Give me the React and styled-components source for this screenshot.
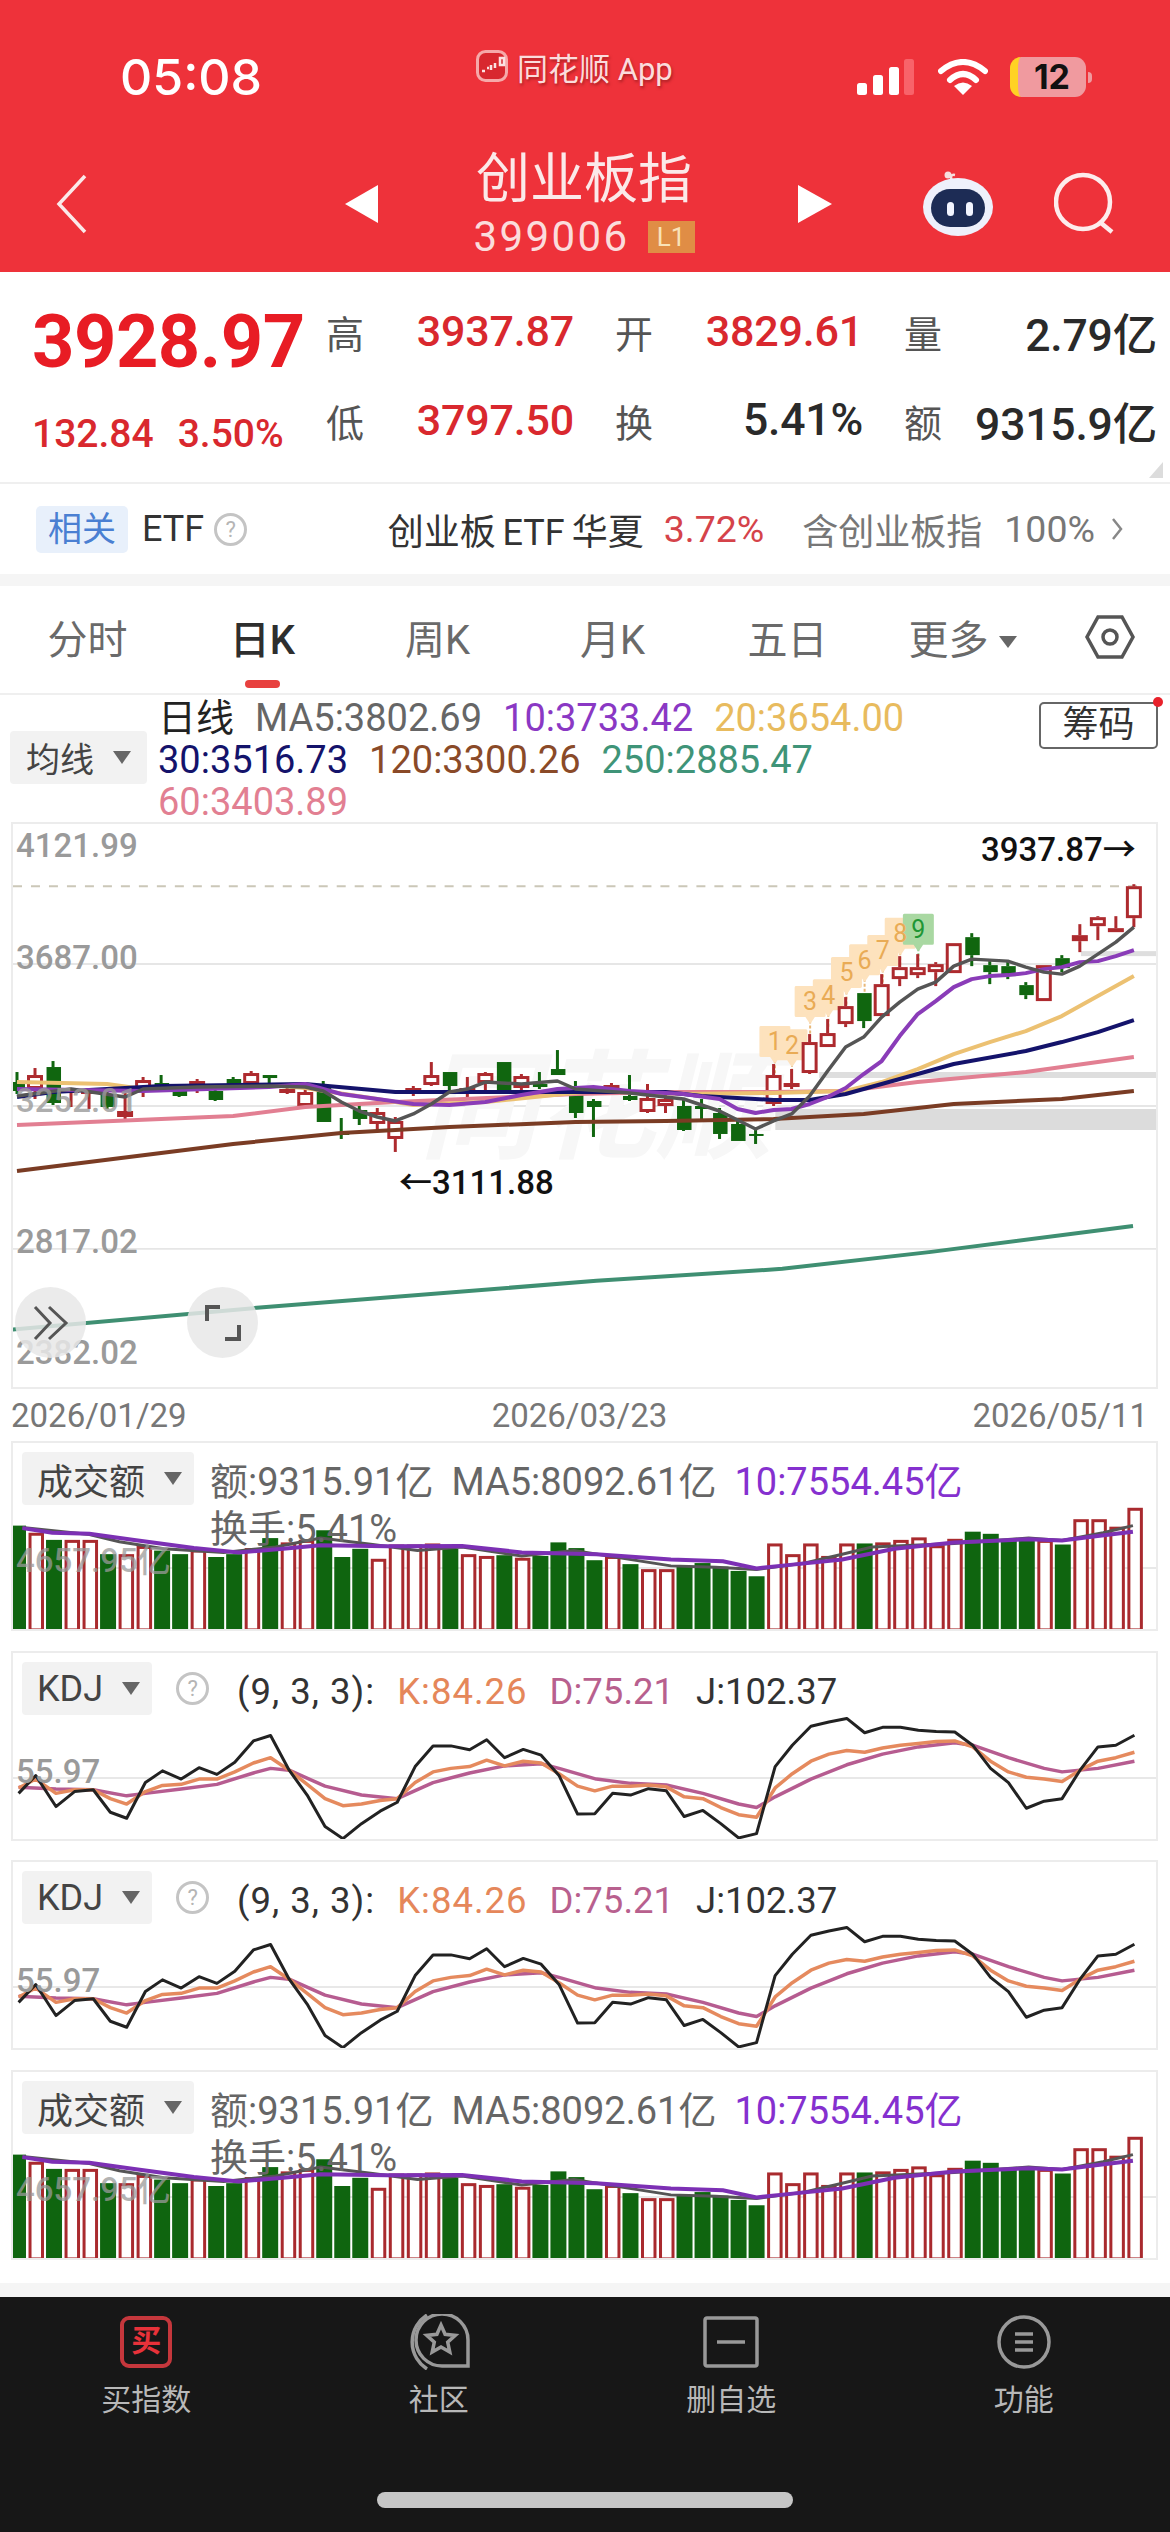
import React from 'react';
import styled, { createGlobalStyle } from 'styled-components';

const FONT = `Roboto, "Noto Sans CJK SC", sans-serif`;
const RED = '#d9282e';

const candleX = (i) => 17 + 18.03 * i;

// [high, bodyTop, bodyBottom, low, up]
const CANDLES = [
  [1073,1083,1092,1095,0],[1069,1076,1090,1100,1],[1062,1068,1104,1106,0],[1090,1090,1094,1108,1],
  [1090,1091,1095,1110,1],[1090,1095,1108,1110,0],[1094,1112,1118,1123,1],[1078,1081,1090,1098,1],
  [1076,1084,1087,1092,0],[1085,1088,1097,1098,0],[1080,1082,1092,1094,1],[1088,1092,1101,1102,0],
  [1078,1080,1087,1088,0],[1072,1074,1085,1088,1],[1076,1076,1079,1087,0],[1088,1090,1093,1095,1],
  [1090,1093,1107,1109,1],[1082,1087,1123,1123,0],[1119,1133,1136,1140,0],[1104,1111,1120,1126,0],
  [1109,1113,1125,1132,1],[1118,1122,1140,1153,1],[1087,1089,1095,1097,1],[1063,1076,1086,1087,1],
  [1073,1073,1087,1095,0],[1078,1089,1093,1098,1],[1073,1074,1084,1093,1],[1063,1063,1093,1093,0],
  [1075,1077,1089,1093,1],[1073,1085,1088,1090,0],[1051,1070,1076,1076,0],[1082,1095,1114,1119,0],
  [1100,1102,1108,1138,0],[1084,1086,1092,1096,1],[1076,1097,1101,1102,0],[1085,1099,1113,1114,1],
  [1096,1100,1107,1114,1],[1100,1107,1131,1132,0],[1100,1107,1110,1121,0],[1109,1114,1135,1140,0],
  [1122,1125,1142,1142,0],[1128,1135,1137,1145,0],[1065,1076,1105,1107,1],[1070,1084,1087,1090,1],
  [1035,1043,1074,1075,1],[1020,1034,1048,1048,1],[998,1007,1025,1028,1],[994,994,1022,1029,0],
  [975,985,1017,1017,1],[957,968,980,987,1],[955,968,976,979,1],[963,965,973,987,1],
  [944,944,974,974,1],[934,938,956,967,0],[962,966,973,985,0],[962,967,977,980,0],
  [983,986,996,1000,0],[966,966,1002,1002,1],[956,959,969,973,0],[925,936,942,953,1],
  [917,918,927,941,1],[917,929,932,932,1],[885,887,919,928,1],
];

const MA_LINES = [
  { color: '#e27f92', width: 4, pts: [[0,1126],[12,1117],[16,1108],[21,1103],[31,1095],[36,1093],[42,1093],[46,1092],[50,1083],[56,1073],[58,1068],[62,1058]] },
  { color: '#7a3c24', width: 4, pts: [[0,1172],[12,1145],[18,1134],[24,1128],[31,1123],[36,1122],[42,1120],[47,1115],[52,1105],[58,1100],[62,1092]] },
  { color: '#ecc172', width: 4, pts: [[0,1083],[5,1085],[7,1090],[14,1086],[16,1089],[20,1100],[22,1106],[26,1103],[32,1092],[37,1095],[42,1094],[46,1092],[48,1083],[50,1070],[52,1055],[54,1043],[56,1032],[58,1017],[60,997],[62,977]] },
  { color: '#14136b', width: 4, pts: [[0,1098],[2,1093],[5,1090],[8,1087],[16,1085],[21,1093],[31,1093],[36,1093],[38,1097],[42,1101],[44,1101],[46,1095],[48,1085],[52,1065],[56,1052],[58,1043],[60,1033],[62,1021]] },
  { color: '#8a3cb8', width: 4, pts: [[0,1090],[7,1092],[14,1088],[16,1085],[18,1095],[20,1100],[22,1105],[24,1106],[26,1103],[28,1096],[30,1090],[32,1088],[34,1092],[37,1095],[39,1100],[40,1110],[41,1114],[42,1111],[43,1110],[44,1105],[45,1098],[46,1089],[47,1075],[48,1062],[49,1037],[50,1015],[51,1002],[52,988],[53,980],[54,977],[55,976],[56,974],[57,970],[58,968],[59,963],[60,962],[61,957],[62,951]] },
  { color: '#555555', width: 3.5, pts: [[0,1097],[3,1090],[6,1098],[7,1090],[10,1088],[14,1087],[16,1088],[17,1092],[18,1103],[19,1112],[20,1118],[21,1122],[22,1115],[23,1105],[24,1093],[25,1090],[26,1083],[28,1085],[30,1082],[31,1090],[34,1094],[37,1100],[39,1112],[41,1130],[42,1122],[43,1115],[44,1097],[45,1072],[46,1048],[47,1038],[48,1018],[49,1003],[50,990],[51,983],[52,967],[53,960],[54,961],[55,962],[56,968],[57,973],[58,975],[59,967],[60,955],[61,943],[62,928]] },
];

const MA250 = '10,1331 257,1309 597,1282 783,1270 932,1253 1134,1227';

const TD_MARKS = [
  ['1',483,670],['2',530,680],['3',580,550],['4',630,530],['5',680,463],
  ['6',730,425],['7',780,397],['8',828,345],['9',878,333],
].map(([n, zx, zy]) => ({ n, x: 600 + zx * 0.3635, y: 820 + zy / 3, nine: n === '9' }));

const VOLUME_TOPS = [265,285,305,305,305,345,345,322,335,345,332,353,345,328,300,312,305,278,353,330,358,318,318,315,330,345,350,348,355,350,312,328,362,350,373,387,387,380,370,380,392,407,315,345,315,350,315,315,312,305,298,320,302,282,288,305,305,305,318,247,247,268,215];
const VOLUME_UP = [0,1,0,1,1,0,1,1,0,0,1,0,0,1,0,1,1,0,0,0,1,1,1,1,0,1,1,0,1,0,0,0,0,1,0,1,1,0,0,0,0,0,1,1,1,1,1,0,1,1,1,1,1,0,0,0,0,1,0,1,1,1,1];

const VOL_MA10 = [[30,272],[70,285],[120,288],[180,305],[260,328],[320,340],[380,330],[430,320],[520,323],[620,322],[700,340],[800,345],[900,360],[970,365],[1015,385],[1060,375],[1130,360],[1200,330],[1280,312],[1380,303],[1425,307],[1470,295],[1520,282]];
const VOL_MA5 = [[30,270],[120,290],[160,310],[220,330],[300,340],[370,325],[430,300],[500,318],[560,335],[620,325],[700,350],[770,335],[900,378],[960,382],[1015,388],[1080,370],[1130,345],[1170,325],[1280,315],[1380,300],[1425,307],[1480,285],[1520,265]];

const KDJ_J = [[25,1015],[48,965],[75,1052],[100,1010],[125,1005],[148,1068],[170,1085],[195,985],[218,952],[243,975],[267,943],[291,962],[315,928],[340,868],[363,853],[388,950],[412,1020],[436,1108],[460,1142],[485,1100],[510,1065],[533,1040],[557,940],[581,882],[605,882],[630,893],[653,865],[677,915],[702,892],[726,908],[750,965],[775,1073],[798,1072],[822,1015],[846,1020],[870,1002],[894,1008],[918,1080],[943,1063],[967,1100],[991,1140],[1015,1128],[1040,940],[1063,880],[1088,827],[1112,815],[1136,805],[1160,845],[1184,830],[1208,830],[1232,838],[1256,842],[1281,843],[1305,880],[1329,945],[1353,985],[1377,1057],[1401,1037],[1425,1030],[1449,950],[1473,885],[1497,880],[1522,852]];
const KDJ_K = [[25,1000],[48,975],[75,1015],[100,1005],[125,1005],[148,1030],[170,1045],[195,1010],[218,993],[243,990],[267,975],[291,975],[315,955],[340,930],[363,915],[388,950],[412,990],[436,1030],[460,1050],[485,1045],[510,1035],[533,1030],[557,985],[581,955],[605,945],[630,940],[653,922],[677,938],[702,925],[726,930],[750,960],[775,995],[798,1008],[822,995],[846,995],[870,992],[894,997],[918,1025],[943,1030],[967,1055],[991,1075],[1015,1082],[1040,1000],[1063,960],[1088,925],[1112,905],[1136,895],[1160,900],[1184,888],[1208,880],[1232,875],[1256,870],[1281,868],[1305,885],[1329,925],[1353,955],[1377,970],[1401,975],[1425,982],[1449,950],[1473,925],[1497,915],[1522,900]];
const KDJ_D = [[25,998],[75,1003],[125,1005],[170,1022],[195,1015],[243,1003],[291,990],[340,958],[363,945],[388,950],[436,995],[485,1020],[533,1030],[581,985],[630,958],[677,938],[726,932],[750,945],[800,975],[846,987],[894,992],[943,1015],[991,1045],[1015,1055],[1040,1025],[1088,975],[1136,935],[1184,905],[1232,885],[1281,873],[1305,880],[1353,915],[1401,945],[1425,955],[1473,945],[1522,925]];

// the lower panels were measured on a 1.34x crop
const sub = (pts) => pts.map(([x, y]) => `${(x * 0.746).toFixed(1)},${(1430 + y * 0.357).toFixed(1)}`).join(' ');

const GlobalStyle = createGlobalStyle`
  html, body { margin: 0; padding: 0; background: #fff; }
  body { font-family: ${FONT}; -webkit-font-smoothing: antialiased; }
  * { box-sizing: border-box; }
`;

const Page = styled.div`
  width: 1170px;
  height: 2532px;
  display: flex;
  flex-direction: column;
  overflow: hidden;
  background: #fff;
`;

const Header = styled.header`
  height: 272px;
  background: #ee323a;
  color: #fff;
  flex: none;
`;

const StatusBar = styled.div`
  height: 140px;
  padding-top: 40px;
  display: grid;
  grid-template-columns: 476px 380px 1fr;
  grid-auto-rows: 74px;
  align-items: center;
`;

const Time = styled.div`
  padding-left: 120px;
  font: 500 50px/74px Inter, sans-serif;
`;

const AppBrand = styled.div`
  display: flex;
  align-items: center;
  gap: 9px;
  margin-top: -22px;
  font-size: 31px;
  color: #fbdcdc;
  white-space: nowrap;
  text-shadow: 1px 2px 3px rgba(120, 20, 20, 0.6);
`;

const StatusIcons = styled.div`
  display: flex;
  align-items: center;
`;

const Battery = styled.div`
  width: 76px;
  height: 40px;
  margin-left: 22px;
  border-radius: 11px;
  background: #f09a9f;
  border-left: 8px solid #ffd224;
  color: #111;
  font: 700 34px/40px Inter, sans-serif;
  text-align: center;
`;

const BatteryNub = styled.div`
  width: 4px;
  height: 11px;
  margin-left: 2px;
  border-radius: 0 4px 4px 0;
  background: #f09a9f;
`;

const NavBar = styled.nav`
  height: 127px;
  display: grid;
  grid-template-columns: 345px 33px 1fr 34px 338px;
  align-items: center;
`;

const BackCell = styled.div`
  padding-left: 56px;
  display: flex;
`;

const Triangle = styled.div`
  width: 0;
  height: 0;
  border-top: 19px solid transparent;
  border-bottom: 19px solid transparent;
  ${(p) => (p.$right ? 'border-left: 34px solid #fff;' : 'border-right: 33px solid #fff;')}
`;

const TitleBlock = styled.div`
  display: flex;
  flex-direction: column;
  align-items: center;
  padding-right: 8px;
`;

const Title = styled.div`
  font-size: 54px;
  line-height: 58px;
  color: #fbe9e9;
`;

const CodeRow = styled.div`
  display: flex;
  align-items: center;
  gap: 18px;
  margin-top: 8px;
`;

const Code = styled.span`
  font-size: 42px;
  line-height: 40px;
  letter-spacing: 2.4px;
  color: #fbdcdc;
`;

const LevelBadge = styled.span`
  width: 47px;
  height: 32px;
  background: #e08d45;
  color: #f9e2b8;
  font-size: 26px;
  line-height: 32px;
  text-align: center;
`;

const NavActions = styled.div`
  display: flex;
  align-items: center;
  gap: 60px;
  padding-left: 90px;
`;

const Quote = styled.section`
  height: 212px;
  padding: 31px 0 0 32px;
  position: relative;
  display: flex;
  flex: none;
  border-bottom: 2px solid #efefef;
`;

const PriceBlock = styled.div`
  width: 294px;
  flex: none;
`;

const BigPrice = styled.div`
  color: #e81c24;
  font-size: 74px;
  font-weight: 700;
  line-height: 78px;
  letter-spacing: -0.5px;
`;

const ChangeRow = styled.div`
  display: flex;
  gap: 24px;
  margin-top: 30px;
  color: ${RED};
  font-size: 39px;
  font-weight: 500;
  line-height: 46px;
`;

const StatGrid = styled.div`
  display: grid;
  grid-template-columns: 248px 248px 253px;
  grid-auto-rows: 60px;
  column-gap: 41px;
  row-gap: 29px;
  margin-top: -2px;
`;

const StatCell = styled.div`
  display: flex;
  align-items: center;
  justify-content: space-between;
`;

const StatLabel = styled.span`
  color: #555;
  font-size: 38px;
`;

const StatValue = styled.span`
  color: ${(p) => (p.$red ? RED : '#2a2a2a')};
  font-size: ${(p) => (p.$red ? 43 : 44.5)}px;
  font-weight: 500;
  letter-spacing: -0.2px;
`;

const CornerMark = styled.div`
  position: absolute;
  right: 7px;
  bottom: 4px;
  width: 0;
  height: 0;
  border-left: 14px solid transparent;
  border-bottom: 16px solid #dcdcdc;
`;

const EtfRow = styled.section`
  height: 90px;
  flex: none;
  display: flex;
  align-items: center;
  padding: 0 47px 0 36px;
  font-size: 36px;
  color: #333;
`;

const RelatedChip = styled.span`
  width: 92px;
  height: 47px;
  border-radius: 5px;
  background: #e8f0fb;
  color: #4a7fd2;
  font-size: 34px;
  line-height: 47px;
  text-align: center;
`;

const EtfTag = styled.span`
  margin-left: 14px;
`;

const Help = styled.span`
  width: 33px;
  height: 33px;
  flex: none;
  margin-left: ${(p) => p.$gap || 10}px;
  margin-top: ${(p) => p.$top || 0}px;
  border: 3px solid #c4c4c4;
  border-radius: 50%;
  color: #b5b5b5;
  font-size: 22px;
  line-height: 27px;
  text-align: center;
`;

const EtfLinks = styled.div`
  margin-left: auto;
  display: flex;
  align-items: center;
  white-space: nowrap;
`;

const EtfName = styled.span`
  color: #333;
  word-spacing: -2px;
`;

const EtfPct = styled.span`
  margin-left: 20px;
  font-size: 37.5px;
  color: #d5434a;
`;

const EtfHold = styled.span`
  margin-left: 38px;
  color: #777;
`;

const EtfWeight = styled.span`
  margin-left: 22px;
  margin-right: 16px;
  font-size: 37.5px;
  color: #777;
`;

const GreyBand = styled.div`
  height: ${(p) => p.$h}px;
  flex: none;
  background: #f5f5f5;
`;

const Spacer = styled.div`
  height: ${(p) => p.$h}px;
  flex: none;
`;

const Tabs = styled.nav`
  height: 109px;
  flex: none;
  padding-bottom: 5px;
  display: grid;
  grid-template-columns: repeat(6, 175px) 1fr;
  align-items: center;
  justify-items: center;
  border-bottom: 2px solid #efefef;
`;

const Tab = styled.div`
  position: relative;
  font-size: 40px;
  color: ${(p) => (p.$active ? '#2e2e2e' : '#6a6a6a')};
  font-weight: ${(p) => (p.$active ? 500 : 400)};
`;

const TabMark = styled.span`
  position: absolute;
  left: 50%;
  bottom: -22px;
  width: 35px;
  height: 8px;
  margin-left: -18px;
  border-radius: 4px;
  background: #e8413f;
`;

const MoreCaret = styled.span`
  display: inline-block;
  width: 0;
  height: 0;
  margin-left: 10px;
  vertical-align: 6px;
  border-left: 9px solid transparent;
  border-right: 9px solid transparent;
  border-top: 12px solid #666;
`;

const LegendArea = styled.section`
  height: 127px;
  flex: none;
  position: relative;
  padding-left: 10px;
  display: flex;
`;

const MaPicker = styled.div`
  width: 137px;
  height: 53px;
  margin-top: 36px;
  margin-right: 11px;
  flex: none;
  display: flex;
  align-items: center;
  padding-left: 16px;
  gap: 19px;
  background: #f2f2f2;
  border-radius: 4px;
  font-size: 34px;
  color: #444;
`;

const Caret = styled.span`
  width: 0;
  height: 0;
  flex: none;
  border-left: 9px solid transparent;
  border-right: 9px solid transparent;
  border-top: 13px solid #666;
`;

const LegendText = styled.div`
  width: 842px;
  display: flex;
  flex-wrap: wrap;
  align-content: flex-start;
  column-gap: 21px;
  padding-top: 2px;
  font-size: 38px;
  line-height: 42px;
`;

const Reading = styled.span`
  color: ${(p) => p.$color};
  width: ${(p) => (p.$full ? '100%' : 'auto')};
  letter-spacing: ${(p) => p.$track || 0}px;
`;

const ChipButton = styled.div`
  position: absolute;
  top: 7px;
  right: 12px;
  width: 119px;
  height: 47px;
  border: 2px solid #666;
  border-radius: 5px;
  font-size: 36px;
  line-height: 42px;
  text-align: center;
  color: #333;
`;

const RedDot = styled.span`
  position: absolute;
  top: -7px;
  right: -7px;
  width: 10px;
  height: 10px;
  border-radius: 50%;
  background: #e8212b;
`;

const Panel = styled.section`
  position: relative;
  height: ${(p) => p.$h}px;
  margin: ${(p) => p.$gap || 0}px 12px 0 11px;
  flex: none;
  border: 2px solid #ececec;
`;

const Canvas = styled.svg`
  position: absolute;
  inset: 0;
  width: 100%;
  height: 100%;
`;

const PanelHead = styled.div`
  position: relative;
  display: flex;
  align-items: flex-start;
  padding: 9px 0 0 9px;
`;

const Picker = styled.div`
  height: 53px;
  flex: none;
  display: flex;
  align-items: center;
  gap: 19px;
  padding: 0 12px 0 15px;
  background: #f2f2f2;
  border-radius: 4px;
  font-size: 36px;
  color: #444;
`;

const VolumeReadings = styled.div`
  width: 800px;
  margin: 7px 0 0 16px;
  display: flex;
  flex-wrap: wrap;
  column-gap: 18px;
  font-size: 38px;
  line-height: 47px;
`;

const KdjReadings = styled.div`
  width: 800px;
  margin: 5px 0 0 28px;
  display: flex;
  column-gap: 22px;
  font-size: 36.5px;
  line-height: 49px;
`;

const AxisLabel = styled.span`
  position: absolute;
  left: 3px;
  top: ${(p) => p.$top}px;
  font-size: 33px;
  line-height: 36px;
  font-weight: 500;
  color: #9a9a9a;
  opacity: ${(p) => p.$fade || 1};
  white-space: nowrap;
`;

const PriceMark = styled.span`
  position: absolute;
  left: ${(p) => p.$left}px;
  top: ${(p) => p.$top}px;
  font-size: 33px;
  font-weight: 500;
  line-height: 36px;
  color: #111;
`;

const RoundTool = styled.div`
  position: absolute;
  top: 463px;
  left: ${(p) => p.$left}px;
  width: 71px;
  height: 71px;
  display: flex;
  align-items: center;
  justify-content: center;
  border-radius: 50%;
  background: rgba(232, 232, 232, 0.85);
`;

const DateRow = styled.div`
  height: 52px;
  flex: none;
  padding: 0 22px 0 11px;
  display: flex;
  align-items: center;
  justify-content: space-between;
  font-size: 33px;
  color: #777;
`;

const Footer = styled.footer`
  flex: 1;
  background: #171717;
  position: relative;
  display: grid;
  grid-template-columns: repeat(4, 1fr);
  align-content: start;
  padding-top: 18px;
`;

const FooterItem = styled.div`
  display: flex;
  flex-direction: column;
  align-items: center;
  font-size: 30px;
  color: #b8b8b8;
`;

const FooterIcon = styled.div`
  height: 54px;
  margin-bottom: 6px;
  display: flex;
  align-items: center;
`;

const BuyIcon = styled.span`
  width: 52px;
  height: 52px;
  border: 4px solid #c5373c;
  border-radius: 9px;
  color: #e8323a;
  font-size: 30px;
  font-weight: 700;
  line-height: 42px;
  text-align: center;
`;

const HomeBar = styled.div`
  position: absolute;
  left: 377px;
  top: 195px;
  width: 416px;
  height: 16px;
  border-radius: 8px;
  background: #c6c6c6;
`;

function Logo() {
  return (
    <svg width="32" height="32" viewBox="0 0 32 32">
      <rect x="1.5" y="1.5" width="29" height="29" rx="8" fill="#d8282f" stroke="#f6a9a9" strokeWidth="3" />
      <path d="M6 21h3M11 18h2M15 15v5M19 13v5M24 8h4v7h-4z" stroke="#fbe2e2" strokeWidth="2.5" fill="none" />
    </svg>
  );
}

function SignalIcon() {
  return (
    <svg width="58" height="36" viewBox="0 0 58 36">
      <rect x="1" y="24" width="10" height="12" rx="2.5" fill="#fff" />
      <rect x="17" y="16" width="10" height="20" rx="2.5" fill="#fff" />
      <rect x="33" y="8" width="10" height="28" rx="2.5" fill="#fff" />
      <rect x="48" y="0" width="10" height="36" rx="2.5" fill="#f8636a" />
    </svg>
  );
}

function WifiIcon() {
  return (
    <svg width="50" height="36" viewBox="0 0 50 36" style={{ marginLeft: 24 }}>
      <path d="M3 12Q25 -6 47 12" fill="none" stroke="#fff" strokeWidth="6" strokeLinecap="round" />
      <path d="M12 21Q25 9 38 21" fill="none" stroke="#fff" strokeWidth="6" strokeLinecap="round" />
      <path d="M25 36L16 27Q25 20 34 27Z" fill="#fff" />
    </svg>
  );
}

function BackIcon() {
  return (
    <svg width="32" height="60" viewBox="0 0 32 60">
      <path d="M29 2L3 30L29 58" fill="none" stroke="#fbe9e9" strokeWidth="3.5" />
    </svg>
  );
}

function RobotIcon() {
  return (
    <svg width="72" height="66" viewBox="0 0 72 66" style={{ flex: 'none' }}>
      <path d="M30 10Q27 3 33 4" fill="none" stroke="#f6dede" strokeWidth="2.5" />
      <circle cx="26" cy="4" r="3.5" fill="#f6dede" />
      <ellipse cx="36" cy="36" rx="35" ry="29" fill="#eef0fb" />
      <rect x="9" y="18" width="54" height="38" rx="19" fill="#1d2c55" />
      <rect x="25" y="31" width="7" height="14" rx="3.5" fill="#f3f5ff" />
      <rect x="44" y="31" width="7" height="14" rx="3.5" fill="#f3f5ff" />
    </svg>
  );
}

function SearchIcon() {
  return (
    <svg width="60" height="64" viewBox="0 0 60 64">
      <circle cx="29" cy="30" r="27" fill="none" stroke="#fdecec" strokeWidth="4.5" />
      <path d="M47 51L58 60" stroke="#fdecec" strokeWidth="4.5" />
    </svg>
  );
}

function HexIcon() {
  return (
    <svg width="50" height="44" viewBox="0 0 50 44">
      <path d="M13 2H37L48 22L37 42H13L2 22Z" fill="none" stroke="#555" strokeWidth="3.5" />
      <circle cx="25" cy="22" r="7" fill="none" stroke="#555" strokeWidth="3.5" />
    </svg>
  );
}

function KChart() {
  return (
    <Canvas viewBox="13 825 1144 563">
      <g stroke="#e6e6e6" strokeWidth="2">
        <line x1="13" x2="1157" y1="965" y2="965" />
        <line x1="13" x2="1157" y1="1107" y2="1107" />
        <line x1="13" x2="1157" y1="1250" y2="1250" />
      </g>
      <rect x="1082" y="952" width="76" height="5" fill="#dedede" />
      <rect x="820" y="1073" width="338" height="6" fill="#dedede" />
      <rect x="776" y="1110" width="382" height="21" fill="#dcdcdc" />
      <text x="420" y="1150" fontSize="118" fontWeight="700" fontStyle="italic" fill="#f7f7f7" fontFamily={FONT}>同花顺</text>
      <line x1="13" x2="1145" y1="887" y2="887" stroke="#cbc7b8" strokeWidth="2" strokeDasharray="9 9" />
      <polyline points={MA250} fill="none" stroke="#3f8f72" strokeWidth="4" />
      {TD_MARKS.map(({ n, x, y, nine }) => (
        <g key={n}>
          <line x1={x} x2={x} y1={y + 18} y2={y + 32} stroke={nine ? '#8cc98a' : '#e8b778'} strokeWidth="2" strokeDasharray="3 2" />
          <path
            d={`M${x - 14} ${y - 15}h28v28h-10l-4 6l-4 -6h-10z`}
            fill={nine ? '#a9d8a2' : '#fde2bd'}
            stroke={nine ? '#a9d8a2' : '#fde2bd'}
            strokeWidth="3"
            strokeLinejoin="round"
          />
        </g>
      ))}
      {TD_MARKS.map(({ n, x, y, nine }) => (
        <text key={n} x={x} y={y + 8} fontSize="25" textAnchor="middle" fill={nine ? '#1f9634' : '#e9ab55'} fontFamily={FONT}>{n}</text>
      ))}
      {CANDLES.map(([hi, top, bottom, lo, up], i) => {
        const x = candleX(i);
        const color = up ? '#ad2a2e' : '#10660f';
        return (
          <g key={i}>
            <line x1={x} x2={x} y1={hi} y2={top} stroke={color} strokeWidth="3" />
            <line x1={x} x2={x} y1={bottom} y2={lo} stroke={color} strokeWidth="3" />
            <rect
              x={x - 6.5}
              y={top + (up ? 1.5 : 0)}
              width={up ? 13 : 14.5}
              height={Math.max(bottom - top - (up ? 3 : 0), 1)}
              fill={up ? '#fff' : color}
              stroke={up ? color : 'none'}
              strokeWidth="3"
            />
          </g>
        );
      })}
      {MA_LINES.map((line) => (
        <polyline
          key={line.color}
          points={line.pts.map(([i, y]) => `${candleX(i)},${y}`).join(' ')}
          fill="none"
          stroke={line.color}
          strokeWidth={line.width}
          strokeLinejoin="round"
        />
      ))}
    </Canvas>
  );
}

function VolumePanel({ gap }) {
  return (
    <Panel $h={190} $gap={gap}>
      <Canvas viewBox="13 1442 1144 186">
        <line x1="13" x2="1157" y1="1567" y2="1567" stroke="#e8e8e8" strokeWidth="2" />
        {VOLUME_TOPS.map((t, i) => {
          const x = candleX(i) + 1;
          const y = 1430 + t * 0.357;
          return VOLUME_UP[i] ? (
            <rect key={i} x={x - 6} y={y + 1.5} width={12.5} height={1627.5 - y} fill="#fff" stroke="#a92a2e" strokeWidth="3" />
          ) : (
            <rect key={i} x={x - 8} y={y} width={16} height={1629 - y} fill="#0f650f" />
          );
        })}
        <polyline points={sub(VOL_MA5)} fill="none" stroke="#555" strokeWidth="3" />
        <polyline points={sub(VOL_MA10)} fill="none" stroke="#7c30b4" strokeWidth="4" />
      </Canvas>
      <PanelHead>
        <Picker>
          成交额
          <Caret />
        </Picker>
        <VolumeReadings>
          <Reading $color="#666">额:9315.91亿</Reading>
          <Reading $color="#666">MA5:8092.61亿</Reading>
          <Reading $color="#8530cf">10:7554.45亿</Reading>
          <Reading $color="#666" $full>换手:5.41%</Reading>
        </VolumeReadings>
      </PanelHead>
      <AxisLabel $top={100} $fade={0.75}>4657.95亿</AxisLabel>
    </Panel>
  );
}

function KdjPanel({ gap }) {
  return (
    <Panel $h={190} $gap={gap}>
      <Canvas viewBox="13 1652 1144 186">
        <line x1="13" x2="1157" y1="1777" y2="1777" stroke="#e8e8e8" strokeWidth="2" />
        <polyline points={sub(KDJ_D)} fill="none" stroke="#b65c90" strokeWidth="3.5" strokeLinejoin="round" />
        <polyline points={sub(KDJ_K)} fill="none" stroke="#e58a5e" strokeWidth="3.5" strokeLinejoin="round" />
        <polyline points={sub(KDJ_J)} fill="none" stroke="#222" strokeWidth="3" strokeLinejoin="round" />
      </Canvas>
      <PanelHead>
        <Picker>
          KDJ
          <Caret />
        </Picker>
        <Help $gap={24} $top={10}>?</Help>
        <KdjReadings>
          <Reading $color="#333" $track={1}>(9, 3, 3):</Reading>
          <Reading $color="#e5875a" $track={1}>K:84.26</Reading>
          <Reading $color="#b8608e">D:75.21</Reading>
          <Reading $color="#333">J:102.37</Reading>
        </KdjReadings>
      </PanelHead>
      <AxisLabel $top={101}>55.97</AxisLabel>
    </Panel>
  );
}

export default function App() {
  return (
    <Page>
      <GlobalStyle />
      <Header>
        <StatusBar>
          <Time>05:08</Time>
          <AppBrand>
            <Logo />
            同花顺 App
          </AppBrand>
          <StatusIcons>
            <SignalIcon />
            <WifiIcon />
            <Battery>12</Battery>
            <BatteryNub />
          </StatusIcons>
        </StatusBar>
        <NavBar>
          <BackCell>
            <BackIcon />
          </BackCell>
          <Triangle />
          <TitleBlock>
            <Title>创业板指</Title>
            <CodeRow>
              <Code>399006</Code>
              <LevelBadge>L1</LevelBadge>
            </CodeRow>
          </TitleBlock>
          <Triangle $right />
          <NavActions>
            <RobotIcon />
            <SearchIcon />
          </NavActions>
        </NavBar>
      </Header>

      <Quote>
        <PriceBlock>
          <BigPrice>3928.97</BigPrice>
          <ChangeRow>
            <span>132.84</span>
            <span>3.50%</span>
          </ChangeRow>
        </PriceBlock>
        <StatGrid>
          <StatCell><StatLabel>高</StatLabel><StatValue $red>3937.87</StatValue></StatCell>
          <StatCell><StatLabel>开</StatLabel><StatValue $red>3829.61</StatValue></StatCell>
          <StatCell><StatLabel>量</StatLabel><StatValue>2.79亿</StatValue></StatCell>
          <StatCell><StatLabel>低</StatLabel><StatValue $red>3797.50</StatValue></StatCell>
          <StatCell><StatLabel>换</StatLabel><StatValue>5.41%</StatValue></StatCell>
          <StatCell><StatLabel>额</StatLabel><StatValue>9315.9亿</StatValue></StatCell>
        </StatGrid>
        <CornerMark />
      </Quote>

      <EtfRow>
        <RelatedChip>相关</RelatedChip>
        <EtfTag>ETF</EtfTag>
        <Help>?</Help>
        <EtfLinks>
          <EtfName>创业板 ETF 华夏</EtfName>
          <EtfPct>3.72%</EtfPct>
          <EtfHold>含创业板指</EtfHold>
          <EtfWeight>100%</EtfWeight>
          <svg width="12" height="24" viewBox="0 0 12 24">
            <path d="M2 2L10 12L2 22" fill="none" stroke="#888" strokeWidth="2.5" />
          </svg>
        </EtfLinks>
      </EtfRow>
      <GreyBand $h={12} />

      <Tabs>
        <Tab>分时</Tab>
        <Tab $active>日K<TabMark /></Tab>
        <Tab>周K</Tab>
        <Tab>月K</Tab>
        <Tab>五日</Tab>
        <Tab>更多<MoreCaret /></Tab>
        <HexIcon />
      </Tabs>

      <LegendArea>
        <MaPicker>
          均线
          <Caret />
        </MaPicker>
        <LegendText>
          <Reading $color="#222">日线</Reading>
          <Reading $color="#666">MA5:3802.69</Reading>
          <Reading $color="#8a38c4">10:3733.42</Reading>
          <Reading $color="#e8bb5e">20:3654.00</Reading>
          <Reading $color="#14136b">30:3516.73</Reading>
          <Reading $color="#8a4a28">120:3300.26</Reading>
          <Reading $color="#3f9478">250:2885.47</Reading>
          <Reading $color="#e27f92">60:3403.89</Reading>
        </LegendText>
        <ChipButton>
          筹码
          <RedDot />
        </ChipButton>
      </LegendArea>

      <Panel $h={567}>
        <KChart />
        <AxisLabel $top={4}>4121.99</AxisLabel>
        <AxisLabel $top={116}>3687.00</AxisLabel>
        <AxisLabel $top={259} $fade={0.8}>3252.01</AxisLabel>
        <AxisLabel $top={400}>2817.02</AxisLabel>
        <AxisLabel $top={511}>2382.02</AxisLabel>
        <PriceMark $left={968} $top={8}>3937.87→</PriceMark>
        <PriceMark $left={386} $top={341}>←3111.88</PriceMark>
        <RoundTool $left={2}>
          <svg width="36" height="36" viewBox="0 0 36 36">
            <path d="M2 2L17 18L2 34M16 2L33 18L16 34" fill="none" stroke="#555" strokeWidth="3" />
          </svg>
        </RoundTool>
        <RoundTool $left={174}>
          <svg width="36" height="36" viewBox="0 0 36 36">
            <path d="M15 2H2V16M34 20V34H20" fill="none" stroke="#555" strokeWidth="4" />
          </svg>
        </RoundTool>
      </Panel>
      <DateRow>
        <span>2026/01/29</span>
        <span>2026/03/23</span>
        <span>2026/05/11</span>
      </DateRow>

      <VolumePanel />
      <KdjPanel gap={20} />
      <KdjPanel gap={19} />
      <VolumePanel gap={20} />
      <Spacer $h={23} />
      <GreyBand $h={14} />

      <Footer>
        <FooterItem>
          <FooterIcon><BuyIcon>买</BuyIcon></FooterIcon>
          买指数
        </FooterItem>
        <FooterItem>
          <FooterIcon>
            <svg width="62" height="56" viewBox="0 0 62 56">
              <path d="M60 52H34A26 26 0 1 1 60 26Z" fill="none" stroke="#999" strokeWidth="3.5" />
              <path d="M19 1A32 32 0 0 0 19 55" fill="none" stroke="#999" strokeWidth="3.5" />
              <polygon points="33,11 37.1,20.3 47.3,21.4 39.7,28.2 41.8,38.1 33,33 24.2,38.1 26.3,28.2 18.7,21.4 28.9,20.3" fill="none" stroke="#999" strokeWidth="3.5" />
            </svg>
          </FooterIcon>
          社区
        </FooterItem>
        <FooterItem>
          <FooterIcon>
            <svg width="56" height="52" viewBox="0 0 56 52">
              <rect x="2" y="2" width="52" height="48" rx="2" fill="none" stroke="#999" strokeWidth="3.5" />
              <path d="M14 26H42" stroke="#999" strokeWidth="3.5" />
            </svg>
          </FooterIcon>
          删自选
        </FooterItem>
        <FooterItem>
          <FooterIcon>
            <svg width="54" height="54" viewBox="0 0 54 54">
              <circle cx="27" cy="27" r="25" fill="none" stroke="#999" strokeWidth="3.5" />
              <path d="M18 19H36M18 27H36M18 35H36" stroke="#999" strokeWidth="3.5" />
            </svg>
          </FooterIcon>
          功能
        </FooterItem>
        <HomeBar />
      </Footer>
    </Page>
  );
}
